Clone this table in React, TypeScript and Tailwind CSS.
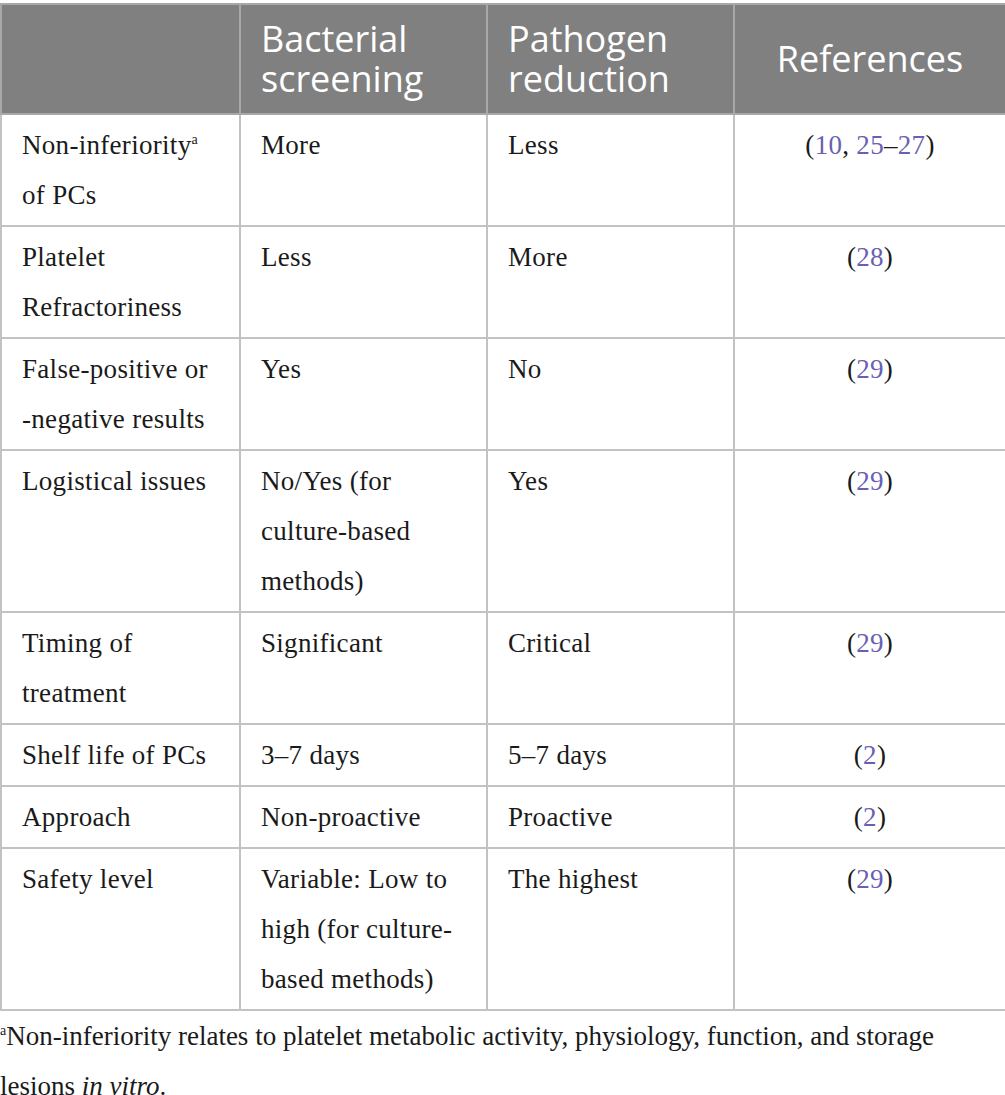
import React from 'react'

type Row = {
  label: React.ReactNode
  screening: React.ReactNode
  reduction: React.ReactNode
  refs: number[][]
}

const serif = { fontFamily: '"Liberation Serif", "DejaVu Serif", serif' }

const rows: Row[] = [
  {
    label: (
      <>
        Non-inferiority
        <span className="relative -top-[10px] text-[14px] leading-none tracking-normal">a</span>
        <br />
        of PCs
      </>
    ),
    screening: 'More',
    reduction: 'Less',
    refs: [[10], [25, 27]],
  },
  {
    label: (
      <>
        Platelet
        <br />
        Refractoriness
      </>
    ),
    screening: 'Less',
    reduction: 'More',
    refs: [[28]],
  },
  {
    label: (
      <>
        False-positive or
        <br />
        -negative results
      </>
    ),
    screening: 'Yes',
    reduction: 'No',
    refs: [[29]],
  },
  {
    label: 'Logistical issues',
    screening: (
      <>
        No/Yes (for
        <br />
        culture-based
        <br />
        methods)
      </>
    ),
    reduction: 'Yes',
    refs: [[29]],
  },
  {
    label: (
      <>
        Timing of
        <br />
        treatment
      </>
    ),
    screening: 'Significant',
    reduction: 'Critical',
    refs: [[29]],
  },
  { label: 'Shelf life of PCs', screening: '3–7 days', reduction: '5–7 days', refs: [[2]] },
  { label: 'Approach', screening: 'Non-proactive', reduction: 'Proactive', refs: [[2]] },
  {
    label: 'Safety level',
    screening: (
      <>
        Variable: Low to
        <br />
        high (for culture-
        <br />
        based methods)
      </>
    ),
    reduction: 'The highest',
    refs: [[29]],
  },
]

function Refs({ groups }: { groups: number[][] }) {
  return (
    <>
      (
      {groups.map((g, i) => (
        <span key={i}>
          {i > 0 && ', '}
          <span className="text-[#6a5fb2]">{g[0]}</span>
          {g.length > 1 && (
            <>
              –<span className="text-[#6a5fb2]">{g[1]}</span>
            </>
          )}
        </span>
      ))}
      )
    </>
  )
}

export default function App() {
  const cell = 'border-2 border-[#c2c2c2] px-5 py-[5px] align-top'
  const head = 'border-2 border-[#a8a8a8] px-5 align-middle font-normal text-left'

  return (
    <div className="w-[1005px] bg-white pt-[3px] text-[#1a1a1a]">
      <table className="w-[1005px] table-fixed border-collapse">
        <colgroup>
          <col className="w-[239px]" />
          <col className="w-[247px]" />
          <col className="w-[247px]" />
          <col className="w-[272px]" />
        </colgroup>
        <thead>
          <tr
            className="h-[110px] bg-[#808080] text-white text-[36px] leading-[40px]"
            style={{ fontFamily: '"Open Sans", "Noto Sans", sans-serif' }}
          >
            <th className={head}></th>
            <th className={head}>
              Bacterial
              <br />
              screening
            </th>
            <th className={head}>
              Pathogen
              <br />
              reduction
            </th>
            <th className={head + ' !text-center'}>References</th>
          </tr>
        </thead>
        <tbody className="text-[27px] leading-[50px] tracking-[0.3px]" style={serif}>
          {rows.map((r, i) => (
            <tr key={i}>
              <td className={cell}>{r.label}</td>
              <td className={cell}>{r.screening}</td>
              <td className={cell}>{r.reduction}</td>
              <td className={cell + ' text-center'}>
                <Refs groups={r.refs} />
              </td>
            </tr>
          ))}
        </tbody>
      </table>
      <p className="text-[27px] leading-[50px] text-[#1a1a1a]" style={serif}>
        <span className="relative -top-[10px] text-[14px] leading-none">a</span>Non-inferiority
        relates to platelet metabolic activity, physiology, function, and storage
        <br />
        lesions <i>in vitro</i>.
      </p>
    </div>
  )
}
